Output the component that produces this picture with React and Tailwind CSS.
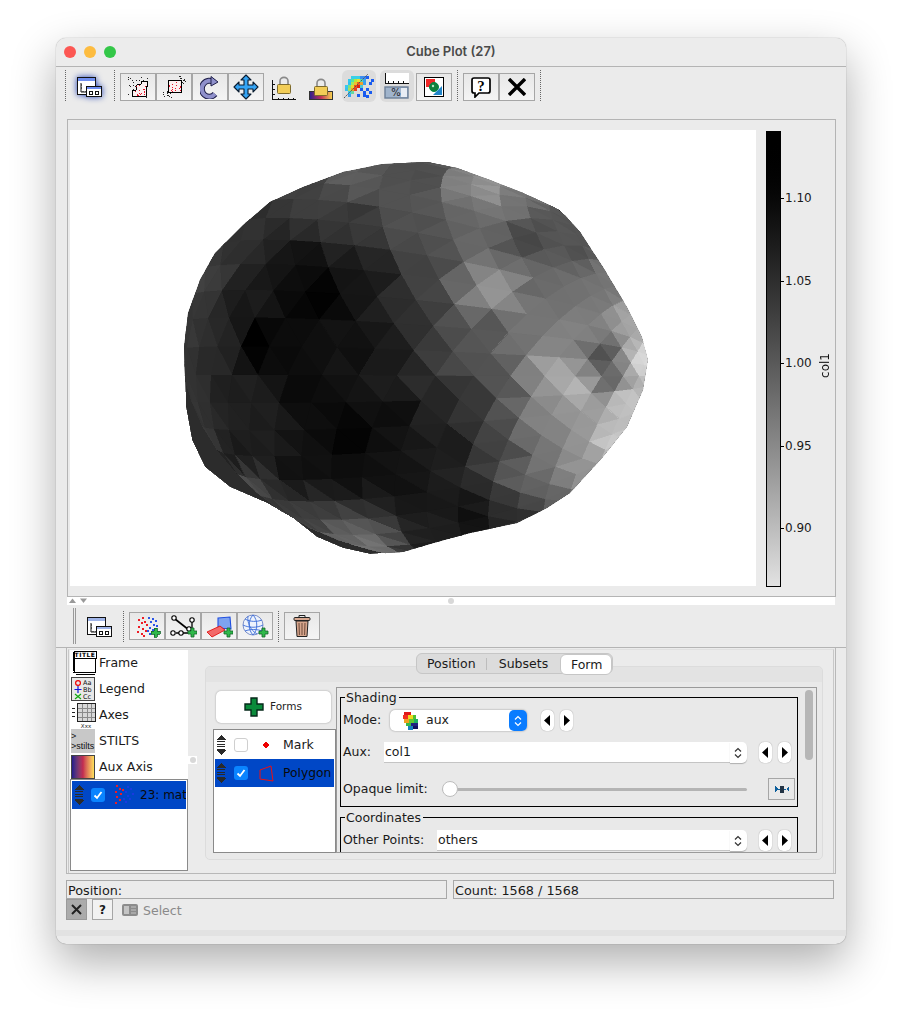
import React from "react";

const uiFont = { fontFamily: '"DejaVu Sans", sans-serif' };

// silhouette of the shape model, in page coordinates
const outline =
  "427,162 383,164 343,172 303,187 270,202 243,225 215,253 200,280 188,313 184,347 186,407 192,440 205,467 230,487 267,503 293,518 317,537 343,548 370,554 403,552 437,542 470,533 517,523 547,508 570,493 603,457 627,427 643,390 648,360 642,337 627,307 603,267 580,232 560,210 523,193 490,180 457,168";

// grey levels read off the picture: x, y, level
const shades = [
  [427,172,0x50],[460,185,0x88],[490,190,0x9a],[520,205,0x78],[545,225,0x55],[525,240,0x48],[575,250,0x55],[600,280,0x78],
  [630,320,0xaa],[645,360,0xdd],[625,400,0xcc],[610,440,0xcc],[575,470,0x99],[555,500,0x66],[520,515,0x33],[480,525,0x18],
  [430,535,0x22],[370,550,0x77],[340,545,0x66],[300,520,0x44],[240,490,0x55],[200,450,0x44],[190,400,0x3a],[190,340,0x3a],
  [205,280,0x44],[250,230,0x33],[310,190,0x44],[350,180,0x66],[350,215,0x3a],[400,200,0x55],[420,225,0x55],[470,215,0x68],
  [300,270,0x11],[250,300,0x1c],[260,345,0x00],[310,290,0x00],[330,300,0x05],[370,280,0x1a],[420,270,0x44],[420,340,0x33],
  [450,350,0x55],[490,290,0x99],[510,290,0x99],[520,340,0x77],[490,330,0x5a],[550,370,0xaa],[575,385,0xbb],[600,355,0x55],
  [610,380,0x66],[580,330,0x88],[560,300,0x77],[530,280,0x66],[590,290,0x77],[500,380,0x58],[470,400,0x3a],[540,420,0x88],
  [580,430,0x99],[500,450,0x44],[450,450,0x1c],[400,420,0x11],[340,420,0x0a],[310,380,0x0a],[300,470,0x11],[350,470,0x11],
  [350,440,0x00],[400,480,0x11],[420,500,0x1a],[470,510,0x11],[490,500,0x33],[520,480,0x66],[540,460,0x77],[440,400,0x2a],
  [400,350,0x1c],[360,350,0x14],[230,400,0x22],[240,450,0x1c],[220,350,0x2a],
];

function shadeAt(x, y, seed) {
  let sum = 0;
  let weight = 0;
  for (const [sx, sy, g] of shades) {
    const d = (sx - x) ** 2 + (sy - y) ** 2 + 60;
    const w = 1 / d ** 1.6;
    sum += g * w;
    weight += w;
  }
  const jitter = ((Math.sin(seed * 12.9898) * 43758.5453) % 1) * 3;
  const base = 255 * (sum / weight / 255) ** 1.05;
  const g = Math.max(0, Math.min(235, Math.round(base + jitter)));
  return `rgb(${g},${g},${g})`;
}

// hexagonal rings round the dark pole, projected off a sphere
function buildMesh() {
  const cx = 416, cy = 358, rx = 236, ry = 200;
  const px = -0.74, py = -0.06;
  const pz = Math.sqrt(1 - px * px - py * py);
  const e1 = [pz, 0, -px];
  const e2 = [-py * e1[2], pz * e1[0] - px * e1[2], py * e1[0]];
  const n2 = Math.hypot(...e2);
  e2[0] /= n2; e2[1] /= n2; e2[2] /= n2;
  const step = 0.165;
  function project(u, v) {
    const l = Math.hypot(u, v);
    const th = l * step;
    const ca = l ? u / l : 1;
    const sa = l ? v / l : 0;
    const s = Math.sin(th);
    const c = Math.cos(th);
    const X = s * (ca * e1[0] + sa * e2[0]) + c * px;
    const Y = s * (ca * e1[1] + sa * e2[1]) + c * py;
    const Z = s * (ca * e1[2] + sa * e2[2]) + c * pz;
    return { x: cx + rx * X, y: cy + ry * Y, z: Z };
  }
  const vert = (ring, j) => {
    if (ring === 0) return project(0, 0);
    const side = Math.floor(j / ring) % 6;
    const t = (j % ring) / ring;
    const a0 = (side * Math.PI) / 3;
    const a1 = ((side + 1) * Math.PI) / 3;
    const u = ring * (Math.cos(a0) * (1 - t) + Math.cos(a1) * t);
    const v = ring * (Math.sin(a0) * (1 - t) + Math.sin(a1) * t);
    return project(u, v);
  };
  const tris = [];
  for (let ring = 0; ring < 16; ring++) {
    const outer = (ring + 1) * 6;
    const inner = ring * 6;
    for (let j = 0; j < outer; j++) {
      const side = Math.floor(j / (ring + 1));
      const k = j - side;
      const a = vert(ring + 1, j);
      const b = vert(ring + 1, (j + 1) % outer);
      const c = ring === 0 ? vert(0, 0) : vert(ring, inner ? k % inner : 0);
      tris.push([a, b, c]);
      if (ring > 0 && (j + 1) % (ring + 1) !== 0) {
        const d = vert(ring, (k + 1) % inner);
        tris.push([b, d, c]);
      }
    }
  }
  return tris
    .map((t) => ({ t, z: (t[0].z + t[1].z + t[2].z) / 3 }))
    .filter((o) => o.z > -0.15)
    .sort((p, q) => p.z - q.z)
    .map(({ t }, i) => {
      const mx = (t[0].x + t[1].x + t[2].x) / 3;
      const my = (t[0].y + t[1].y + t[2].y) / 3;
      return {
        pts: t.map((p) => `${p.x.toFixed(1)},${p.y.toFixed(1)}`).join(" "),
        fill: shadeAt(mx, my, i + 1),
      };
    });
}

const mesh = buildMesh();

const Blob = () => (
  <svg viewBox="70 130 686 456" width="686" height="456" className="block">
    <defs>
      <clipPath id="blob">
        <polygon points={outline} />
      </clipPath>
    </defs>
    <g clipPath="url(#blob)" shapeRendering="crispEdges">
      <polygon points={outline} fill="#2c2c2c" />
      {mesh.map((t, i) => (
        <polygon key={i} points={t.pts} fill={t.fill} stroke={t.fill} strokeWidth="0.6" />
      ))}
    </g>
  </svg>
);

// scattered single pixel points for the toolbar icons
const scatter = (n, x0, y0, w, h, seed) =>
  Array.from({ length: n }, (_, i) => {
    const a = Math.abs(Math.sin((i + 1) * 91.17 + seed) * 9973) % 1;
    const b = Math.abs(Math.sin((i + 1) * 47.31 + seed) * 7919) % 1;
    return [Math.round(x0 + a * w), Math.round(y0 + b * h)];
  });

const Dots = ({ pts, color, size = 1 }) =>
  pts.map(([x, y], i) => <rect key={i} x={x} y={y} width={size} height={size} fill={color} />);

const Plus = ({ x, y }) => (
  <path
    d={`M${x + 3} ${y}h3v3h3v3h-3v3h-3v-3h-3v-3h3z`}
    fill="#2fb84a"
    stroke="#14662a"
    strokeWidth="0.8"
  />
);

const WindowsIcon = ({ glow }) => (
  <svg
    width="30"
    height="24"
    viewBox="0 0 30 24"
    className={glow ? "drop-shadow-[0_0_3px_#1e3fb4]" : ""}
  >
    <rect x="3.5" y="2.5" width="18" height="17" fill="#fff" stroke="#111" />
    <rect x="4" y="3" width="17" height="3" fill={glow ? "#6f8ef0" : "#9fb4e8"} />
    <path d="M7 8v9h8M7 10h1M7 13h1M9 17v-1M12 17v-1" stroke="#111" fill="none" />
    <rect x="12.5" y="11.5" width="15" height="10" fill="#fff" stroke="#111" />
    <rect x="13" y="12" width="14" height="2" fill={glow ? "#6f8ef0" : "#9fb4e8"} />
    <rect x="15.5" y="16.5" width="3" height="3" fill="none" stroke="#111" />
    <rect x="21.5" y="16.5" width="3" height="3" fill="none" stroke="#111" />
  </svg>
);

const BlobBlobIcon = () => (
  <svg width="24" height="24" viewBox="0 0 24 24" shapeRendering="crispEdges">
    <Dots pts={scatter(34, 1, 2, 20, 20, 2)} color="#222" />
    <path d="M11 10l4-1 1-3 5 0 1 5-2 1 0 9-13 1-1-7 4 0z" fill="#fbf0f0" stroke="#000" />
    <Dots pts={scatter(18, 9, 10, 11, 10, 5)} color="#e8152b" />
  </svg>
);

const BoxBoxIcon = () => (
  <svg width="24" height="24" viewBox="0 0 24 24" shapeRendering="crispEdges">
    <Dots pts={scatter(14, 16, 1, 7, 8, 3)} color="#222" />
    <Dots pts={scatter(14, 1, 15, 8, 8, 4)} color="#222" />
    <rect x="6.5" y="5.5" width="13" height="12" fill="#fbf0f0" stroke="#000" />
    <Dots pts={scatter(16, 7, 6, 12, 11, 7)} color="#e8152b" />
  </svg>
);

const RotateIcon = () => (
  <svg width="20" height="24" viewBox="0 0 20 24">
    <path d="M14 7.5A7.5 8 0 1 0 15 19" fill="none" stroke="#20204a" strokeWidth="6" />
    <path d="M14 7.5A7.5 8 0 1 0 15 19" fill="none" stroke="#8f90cb" strokeWidth="4" />
    <path d="M11 1.5l7 5.5-7 4z" fill="#8f90cb" stroke="#20204a" strokeLinejoin="round" />
  </svg>
);

const MoveIcon = () => (
  <svg width="26" height="26" viewBox="0 0 26 26">
    <path
      d="M13 1l5 5h-3v5h5V8l5 5-5 5v-3h-5v5h3l-5 5-5-5h3v-5H6v3l-5-5 5-5v3h5V6H8z"
      fill="#35a4f4"
      stroke="#0a1c30"
      strokeWidth="1.1"
      strokeLinejoin="round"
    />
  </svg>
);

const LockShape = ({ x, y }) => (
  <g>
    <path
      d={`M${x + 3} ${y + 7}V${y + 4}a4 3.6 0 0 1 8 0V${y + 7}`}
      fill="none"
      stroke="#8a8a8a"
      strokeWidth="1.6"
    />
    <rect x={x + 0.5} y={y + 7.5} width="13" height="9" rx="1" fill="#f2cd57" stroke="#7d6a2c" />
  </g>
);

const AxisLockIcon = () => (
  <svg width="24" height="24" viewBox="0 0 24 24">
    <LockShape x={5} y={1} />
    <path
      d="M.5 4v19.5H24M.5 8h2M.5 13h2M.5 18h2M6 23.5v-2M11 23.5v-2M16 23.5v-2M21 23.5v-2"
      stroke="#111"
      fill="none"
      shapeRendering="crispEdges"
    />
  </svg>
);

const AuxLockIcon = () => (
  <svg width="24" height="22" viewBox="0 0 24 22">
    <defs>
      <linearGradient id="ramp">
        <stop offset="0" stopColor="#2a1f8f" />
        <stop offset="0.5" stopColor="#c0305a" />
        <stop offset="1" stopColor="#f8d850" />
      </linearGradient>
    </defs>
    <rect x="0.5" y="13.5" width="23" height="8" fill="url(#ramp)" stroke="#333" />
    <LockShape x={5} y={1} />
  </svg>
);

const DensityIcon = () => {
  const cells = [
    [7,3,"#38d0e8"],[10,3,"#38d0e8"],[13,3,"#38d0e8"],[16,3,"#3a8cf0"],[19,3,"#3a8cf0"],[22,3,"#1a5cf0"],
    [4,6,"#30c8f0"],[7,6,"#58e0a0"],[10,6,"#b0e840"],[13,6,"#e8e030"],[16,6,"#58d8b0"],[19,6,"#38a0f0"],[27,6,"#1a5cf0"],
    [4,9,"#30c0f0"],[7,9,"#a0e860"],[10,9,"#f0c030"],[13,9,"#f06020"],[16,9,"#f0a030"],[19,9,"#38a0f0"],[25,9,"#1a5cf0"],
    [1,12,"#38c8f0"],[4,12,"#80e080"],[7,12,"#e8d830"],[10,12,"#f05020"],[13,12,"#e02010"],[16,12,"#50c8d0"],
    [1,15,"#38c0f0"],[4,15,"#a8e060"],[7,15,"#f0a028"],[10,15,"#e84020"],[16,15,"#1a5cf0"],[22,15,"#1a5cf0"],
    [4,18,"#38c8e8"],[7,18,"#68d8a0"],[19,18,"#1a5cf0"],[25,18,"#1a5cf0"],
    [4,21,"#38a0f0"],[13,21,"#1a5cf0"],[19,21,"#1a5cf0"],[22,22,"#1a5cf0"],
  ];
  return (
    <svg width="30" height="26" viewBox="0 0 30 26" shapeRendering="crispEdges">
      {cells.map(([x, y, c], i) => (
        <rect key={i} x={x} y={y} width="3" height="3" fill={c} />
      ))}
      <path d="M0 25L24 1" stroke="#555" strokeDasharray="2 1" shapeRendering="auto" />
    </svg>
  );
};

const PercentIcon = () => (
  <svg width="26" height="26" viewBox="0 0 26 26">
    <rect x="1" y="0" width="24" height="10" fill="#fff" />
    <path d="M1 0v10.5h24M4 10v-2M9 10v-2M14 10v-2M19 10v-2" stroke="#111" fill="none" shapeRendering="crispEdges" />
    <rect x="1" y="14" width="23" height="11" fill="#a0b4cc" stroke="#6c7f98" strokeWidth="1.4" />
    <rect x="17" y="15" width="6" height="9" fill="#e8edf4" />
    <text x="12" y="23" fontSize="10" fontFamily="DejaVu Sans" textAnchor="middle" fill="#222">%</text>
  </svg>
);

const ColourIcon = () => (
  <svg width="20" height="20" viewBox="0 0 20 20">
    <rect x="0.5" y="0.5" width="19" height="19" fill="#fff" stroke="#000" />
    <rect x="2" y="2" width="9" height="8" fill="#f02828" />
    <path d="M18 9v9H9z" fill="#1f84c8" />
    <circle cx="10" cy="10" r="4.5" fill="#12803c" stroke="#084" />
    <circle cx="9" cy="9" r="1.2" fill="#b8e8c8" />
  </svg>
);

const HelpIcon = () => (
  <svg width="22" height="22" viewBox="0 0 22 22">
    <path
      d="M4 2h14a2 2 0 0 1 2 2v11a2 2 0 0 1-2 2H9l-4 4v-4H4a2 2 0 0 1-2-2V4a2 2 0 0 1 2-2z"
      fill="#fff"
      stroke="#000"
      strokeWidth="1.7"
    />
    <text x="11" y="15" fontSize="15" fontWeight="700" fontFamily="Liberation Serif" textAnchor="middle" fill="#000">?</text>
  </svg>
);

const CloseIcon = () => (
  <svg width="18" height="18" viewBox="0 0 18 18">
    <path d="M1 1l16 16M17 1L1 17" stroke="#000" strokeWidth="3.4" />
  </svg>
);

const AddPointsIcon = () => (
  <svg width="28" height="24" viewBox="0 0 28 24" shapeRendering="crispEdges">
    <Dots pts={[[9,3],[5,5],[8,8],[11,7],[13,10],[5,12],[9,14],[4,17],[8,19],[12,16],[10,21]]} color="#ee1c25" size={2} />
    <Dots pts={[[15,3],[19,4],[22,6],[17,7],[20,10],[16,13],[23,11],[14,16],[19,15],[16,19]]} color="#2a55e8" size={2} />
    <Plus x={18} y={14} />
  </svg>
);

const AddLineIcon = () => (
  <svg width="28" height="24" viewBox="0 0 28 24">
    <path d="M6 5l14 11" stroke="#000" strokeWidth="1.6" />
    <path d="M7 19h14M23 6v11" stroke="#000" strokeWidth="1.3" />
    {[[5,4],[20,15],[4,19],[12,19],[23,6]].map(([x, y], i) => (
      <circle key={i} cx={x} cy={y} r="2.2" fill="#fff" stroke="#000" strokeWidth="1.1" />
    ))}
    <Plus x={19} y={14} />
  </svg>
);

const AddPolyIcon = () => (
  <svg width="28" height="24" viewBox="0 0 28 24">
    <path d="M13 4l12-1 1 12-13-1z" fill="#7ea3f0" stroke="#1f4ee0" strokeWidth="1.1" />
    <path d="M2 18l13-6 5 4-13 7z" fill="#f26a6a" stroke="#e00000" strokeWidth="0.8" />
    <Plus x={19} y={14} />
  </svg>
);

const AddSkyIcon = () => (
  <svg width="28" height="24" viewBox="0 0 28 24">
    <circle cx="12" cy="11" r="10" fill="#eef3fc" stroke="#7b8fc8" />
    <path
      d="M2 11c6 3 14 3 20 0M4 5c5 3 12 3 17 1M4 17c5-2 12-2 17 0M12 1C7 6 7 16 12 21M12 1c5 5 5 15 0 20M7 2c-1 6 2 14 9 18"
      stroke="#3a6cd8"
      fill="none"
      strokeWidth="0.9"
    />
    <Plus x={18} y={14} />
  </svg>
);

const TrashIcon = () => (
  <svg width="18" height="24" viewBox="0 0 18 24">
    <path d="M6 3V1.5h6V3" stroke="#222" fill="none" />
    <rect x="1" y="3.5" width="16" height="3" rx="1" fill="#d8a890" stroke="#222" />
    <path d="M3 7h12l-1 15.5H4z" fill="#d6a58c" stroke="#222" />
    <path d="M6 9l.4 12M9 9v12M12 9l-.4 12" stroke="#6d4a3a" />
  </svg>
);

const FrameIcon = () => (
  <svg width="26" height="26" viewBox="0 0 26 26" shapeRendering="crispEdges">
    <rect x="3.5" y="1.5" width="21" height="21" fill="#fff" stroke="#000" />
    <rect x="3" y="1" width="22" height="7" fill="#fff" stroke="#000" />
    <text x="14" y="7" fontSize="6" fontWeight="700" fontFamily="DejaVu Sans" textAnchor="middle" letterSpacing="0.5" fill="#000">TITLE</text>
    <path d="M2 2h2M2 22h2M2 3v18M5 24h19" stroke="#000" fill="none" />
  </svg>
);

const LegendIcon = () => (
  <svg width="24" height="24" viewBox="0 0 24 24">
    <rect x="0.5" y="0.5" width="23" height="23" fill="#e8e8e8" stroke="#444" />
    <circle cx="7" cy="6" r="2.4" fill="none" stroke="#e00" strokeWidth="1.2" />
    <path d="M3.5 12.5h7M7 9v7" stroke="#11d" strokeWidth="1.2" />
    <path d="M4 17l6 5M10 17l-6 5" stroke="#1a1" strokeWidth="1.2" />
    <g fontSize="6.5" fontFamily="DejaVu Sans" fill="#111">
      <text x="12" y="8">Aa</text>
      <text x="12" y="15">Bb</text>
      <text x="12" y="22">Cc</text>
    </g>
  </svg>
);

const AxesIcon = () => (
  <svg width="26" height="26" viewBox="0 0 26 26" shapeRendering="crispEdges">
    <rect x="6.5" y="1.5" width="18" height="18" fill="#d8d8d8" stroke="#222" />
    <path d="M11 2v17M16 2v17M20 2v17M7 6h17M7 10h17M7 15h17" stroke="#8a8a8a" />
    <path d="M1 6h3v1H1zM1 10h3v1H1zM1 14h3v1H1z" fill="#222" />
    <text x="15" y="25.5" fontSize="5.5" fontFamily="DejaVu Sans" textAnchor="middle" fill="#222">Xxx</text>
  </svg>
);

const StiltsIcon = () => (
  <div
    className="w-[24px] h-[24px] bg-[#c8c8c8] text-[9px] leading-[10px] text-[#111] pt-[2px] overflow-hidden"
    style={{ fontFamily: '"Liberation Sans", sans-serif' }}
  >
    <div>&gt;</div>
    <div>&gt;stilts</div>
  </div>
);

const AuxIcon = () => (
  <div className="w-[24px] h-[24px] border border-[#444] bg-gradient-to-r from-[#241a8c] via-[#c42a50] to-[#fde05a]" />
);

const SortHandle = () => (
  <svg width="10" height="20" viewBox="0 0 10 20" shapeRendering="crispEdges">
    <path d="M5 0l5 5H0zM5 20l-5-5h10z" fill="#2a2a2a" />
    <path d="M1 6.5h8M1 9h8M1 11.5h8M1 14h8" stroke="#2a2a2a" />
  </svg>
);

const Check = ({ on }) =>
  on ? (
    <div className="w-[14px] h-[14px] rounded-[3px] bg-[#0a84ff] flex items-center justify-center">
      <svg width="10" height="10" viewBox="0 0 10 10">
        <path d="M1.5 5.5l2.5 2.5 4.5-6" stroke="#fff" strokeWidth="1.8" fill="none" />
      </svg>
    </div>
  ) : (
    <div className="w-[14px] h-[14px] rounded-[3px] bg-white border border-[#cfcfcf]" />
  );

const Stepper = () => (
  <svg width="8" height="12" viewBox="0 0 8 12">
    <path d="M1 4.5L4 1.5l3 3M1 7.5l3 3 3-3" stroke="#333" strokeWidth="1.2" fill="none" />
  </svg>
);

const ArrowButtons = () => (
  <div className="flex gap-[6px]">
    {[0, 1].map((i) => (
      <div
        key={i}
        className="w-[13px] h-[21px] rounded-[5px] bg-white shadow-[0_0_1px_rgba(0,0,0,0.45)] flex items-center justify-center"
      >
        <svg width="7" height="11" viewBox="0 0 7 11">
          <path d={i === 0 ? "M6 0v11L0 5.5z" : "M1 0v11l6-5.5z"} fill="#000" />
        </svg>
      </div>
    ))}
  </div>
);

const ComboField = ({ width, value }) => (
  <div className="flex">
    <div
      className="h-[21px] bg-white border-b border-[#c4c4c4] pl-[1px] text-[12.5px] leading-[20px]"
      style={{ width }}
    >
      {value}
    </div>
    <div className="w-[17px] h-[21px] bg-white rounded-r-[5px] shadow-[0_1px_1px_rgba(0,0,0,0.25)] flex items-center justify-center pr-[2px]">
      <Stepper />
    </div>
  </div>
);

const Separator = ({ className = "" }) => (
  <div className={`w-0 h-[31px] border-l border-dotted border-[#666] ${className}`} />
);

const ToolButton = ({ children }) => (
  <div className="w-[36px] h-[28px] border border-[#a6a6a6] bg-gradient-to-b from-[#e8e8e8] to-[#f4f4f4] flex items-center justify-center">
    {children}
  </div>
);

const controls = [
  ["Frame", <FrameIcon key="i" />],
  ["Legend", <LegendIcon key="i" />],
  ["Axes", <AxesIcon key="i" />],
  ["STILTS", <StiltsIcon key="i" />],
  ["Aux Axis", <AuxIcon key="i" />],
];

const ticks = [
  ["1.10", 197],
  ["1.05", 280],
  ["1.00", 362],
  ["0.95", 445],
  ["0.90", 527],
];

const TitledBox = ({ title, className, children }) => (
  <fieldset className={`border border-black px-[2px] min-w-0 ${className}`}>
    <legend className="ml-[2px] pl-px pr-[2px] text-[12.5px] leading-[15px]">{title}</legend>
    {children}
  </fieldset>
);

export default function App() {
  return (
    <div className="w-[902px] h-[1018px] bg-white pt-[38px] pl-[56px] overflow-hidden text-[#1a1a1a]" style={uiFont}>
      <div className="w-[790px] h-[906px] rounded-[10px] bg-[#ebebeb] overflow-hidden shadow-[0_0_1px_rgba(0,0,0,0.5),0_18px_45px_rgba(0,0,0,0.32)]">
        {/* title bar */}
        <div className="h-[29px] flex items-center bg-[#ececec] border-b border-[#b4b4b4]">
          <div className="w-[70px] flex gap-[8px] pl-[8px]">
            <div className="w-[12px] h-[12px] rounded-full bg-[#fc5753]" />
            <div className="w-[12px] h-[12px] rounded-full bg-[#fdbc40]" />
            <div className="w-[12px] h-[12px] rounded-full bg-[#33c748]" />
          </div>
          <div
            className="flex-1 text-center pr-[70px] text-[13px] font-semibold text-[#4a4a4a]"
            style={{ fontFamily: "Inter, sans-serif" }}
          >
            Cube Plot (27)
          </div>
        </div>

        {/* main toolbar */}
        <div className="h-[41px] flex items-start pt-[3px]">
          <Separator className="ml-[9px]" />
          <div className="w-[30px] h-[24px] ml-[8px] mt-[5px]">
            <WindowsIcon glow />
          </div>
          <Separator className="ml-[10px]" />
          <div className="flex ml-[5px] mt-[3px]">
            <ToolButton><BlobBlobIcon /></ToolButton>
            <ToolButton><BoxBoxIcon /></ToolButton>
            <ToolButton><RotateIcon /></ToolButton>
            <ToolButton><MoveIcon /></ToolButton>
          </div>
          <div className="ml-[8px] mt-[6px]"><AxisLockIcon /></div>
          <div className="ml-[13px] mt-[8px]"><AuxLockIcon /></div>
          <div className="ml-[9px] w-[34px] h-[32px] rounded-[6px] bg-[#dcdcdc] flex items-center justify-center"><DensityIcon /></div>
          <div className="ml-[4px] w-[34px] h-[32px] rounded-[6px] bg-[#dcdcdc] flex items-center justify-center"><PercentIcon /></div>
          <div className="flex ml-[2px] mt-[3px]">
            <ToolButton><ColourIcon /></ToolButton>
          </div>
          <Separator className="ml-[5px]" />
          <div className="flex ml-[5px] mt-[3px]">
            <ToolButton><HelpIcon /></ToolButton>
            <ToolButton><CloseIcon /></ToolButton>
          </div>
          <Separator className="ml-[5px]" />
        </div>

        {/* plot panel */}
        <div className="ml-[11px] mt-[11px] w-[769px] h-[478px] border border-[#b4b4b4] flex">
          <div className="ml-[2px] mt-[10px] w-[686px] h-[456px] bg-white">
            <Blob />
          </div>
          <div className="ml-[10px] mt-[11px] relative">
            <div className="w-[15px] h-[456px] border border-black bg-gradient-to-b from-[#000] to-[#e2e2e2]" />
            {ticks.map(([label, y]) => (
              <div
                key={label}
                className="absolute left-[15px] flex items-center text-[12px] h-[14px] leading-[14px]"
                style={{ top: y - 131 - 6 }}
              >
                <div className="w-[3px] h-px bg-black mr-[1px]" />
                {label}
              </div>
            ))}
            <div className="absolute left-[52px] top-[222px] text-[12px] leading-[14px] text-[#111] [writing-mode:vertical-rl] rotate-180">
              col1
            </div>
          </div>
        </div>

        {/* divider */}
        <div className="ml-[11px] w-[768px] h-[8px] bg-white flex items-center relative">
          <svg width="20" height="6" viewBox="0 0 20 6" className="ml-[2px]">
            <path d="M0 5l3.5-4.5L7 5z" fill="#999" />
            <path d="M11 .5l3.5 4.5L18 .5z" fill="#999" />
          </svg>
          <div className="absolute left-[381px] w-[6px] h-[6px] rounded-full bg-[#d8d8d8]" />
        </div>

        {/* layer toolbar */}
        <div className="h-[43px] flex items-center border-b border-[#b4b4b4]">
          <div className="ml-[17px] w-[3px] h-[36px] border-x border-[#999]" />
          <div className="ml-[8px] mt-[2px]"><WindowsIcon /></div>
          <Separator className="ml-[9px]" />
          <div className="flex ml-[5px]">
            <ToolButton><AddPointsIcon /></ToolButton>
            <ToolButton><AddLineIcon /></ToolButton>
            <ToolButton><AddPolyIcon /></ToolButton>
            <ToolButton><AddSkyIcon /></ToolButton>
          </div>
          <Separator className="ml-[5px]" />
          <div className="flex ml-[5px]">
            <ToolButton><TrashIcon /></ToolButton>
          </div>
        </div>

        {/* control stack and control panel */}
        <div className="ml-[10px] w-[770px] h-[226px] border border-t-0 border-[#b8b8b8] pt-[1px] px-[1px]">
          <div className="h-full border border-b-0 border-[#c8c8c8] border-t-[#e0e0e0] flex">
            <div className="w-[119px] pl-[1px] shrink-0 relative">
              <div className="bg-white h-[130px]">
                {controls.map(([label, icon]) => (
                  <div key={label} className="h-[26px] flex items-center text-[12.5px]">
                    <div className="w-[29px] pl-px shrink-0">{icon}</div>
                    {label}
                  </div>
                ))}
              </div>
              <div className="-mt-[1px] h-[92px] border border-[#8a8a8a] bg-white p-px relative overflow-hidden">
                <div className="h-[28px] bg-[#0047c6] flex items-center text-[12px] text-[#0a0a0a] overflow-hidden whitespace-nowrap">
                  <div className="ml-[2px]"><SortHandle /></div>
                  <div className="ml-[7px]"><Check on /></div>
                  <svg width="22" height="22" viewBox="0 0 22 22" className="ml-[8px] shrink-0" shapeRendering="crispEdges">
                    <Dots pts={[[3,1],[6,4],[2,7],[7,9],[3,12],[6,15],[2,18],[9,5]]} color="#ee1c25" size={2} />
                    <Dots pts={[[14,2],[17,4],[12,7],[19,9],[14,11],[10,14],[16,14],[12,17]]} color="#1a3ae0" size={2} />
                  </svg>
                  <span className="ml-[5px]">23: mat</span>
                </div>
              </div>
              <div className="absolute left-[119px] top-[106px] w-[9px] h-[8px] bg-white flex items-center justify-center">
                <div className="w-[6px] h-[6px] rounded-full bg-[#d8d8d8]" />
              </div>
            </div>

            <div className="ml-[17px] flex flex-col">
              <div className="mt-[3px] -mb-[8px] relative flex justify-center text-[12.5px] z-10">
                <div className="h-[21px] w-[197px] flex rounded-[6px] bg-[#dcdcdc] border border-[#c6c6c6] items-center pt-px">
                  <div className="w-[70px] text-center">Position</div>
                  <div className="w-px h-[12px] bg-[#bdbdbd]" />
                  <div className="w-[73px] text-center">Subsets</div>
                  <div className="w-[52px] h-[21px] -my-px rounded-[6px] bg-white border border-[#c6c6c6] text-center leading-[19px] pl-[2px]">Form</div>
                </div>
              </div>
              <div className="w-[618px] h-[194px] rounded-[5px] border border-[#dcdcdc] bg-[#e9e9e9] overflow-hidden">
                <div className="h-[15px] bg-[#e3e3e3]" />
                <div className="flex pl-[7px] pt-[5px]">
                  <div className="w-[123px] shrink-0">
                    <div className="ml-[3px] mt-[4px] w-[115px] h-[32px] rounded-[5px] bg-white shadow-[0_0_2px_rgba(0,0,0,0.35)] flex items-center">
                      <svg width="20" height="20" viewBox="0 0 20 20" className="ml-[28px]">
                        <path d="M7 1h6v6h6v6h-6v6H7v-6H1V7h6z" fill="#0a8a3a" stroke="#06281a" strokeWidth="1.4" />
                      </svg>
                      <span className="ml-[6px] text-[10.5px] text-[#222]">Forms</span>
                    </div>
                    <div className="mt-[6px] h-[124px] border border-[#8a8a8a] bg-white p-px text-[12.5px]">
                      <div className="h-[28px] flex items-center">
                        <div className="ml-[1px]"><SortHandle /></div>
                        <div className="ml-[8px]"><Check /></div>
                        <svg width="8" height="8" viewBox="0 0 8 8" className="ml-[14px]">
                          <path d="M4 1l3 3-3 3-3-3z" fill="#ee0000" stroke="#ee0000" />
                        </svg>
                        <span className="ml-[13px]">Mark</span>
                      </div>
                      <div className="h-[28px] bg-[#0047c6] flex items-center whitespace-nowrap overflow-hidden text-[#0a0a0a]">
                        <div className="ml-[1px]"><SortHandle /></div>
                        <div className="ml-[8px]"><Check on /></div>
                        <svg width="18" height="18" viewBox="0 0 18 18" className="ml-[10px] shrink-0">
                          <path d="M2 6l11-4 2 15-13-2z" fill="none" stroke="#ee1010" strokeWidth="1" />
                        </svg>
                        <span className="ml-[7px] text-[12.3px]">Polygon</span>
                      </div>
                    </div>
                  </div>

                  <div className="w-[481px] h-[166px] border border-[#9a9a9a] flex overflow-hidden text-[12.5px]">
                    <div className="w-[466px] shrink-0 pl-[3px] pt-[2px]">
                      <TitledBox title="Shading" className="w-[458px] h-[117px]">
                        <div className="flex items-center mt-[5px] h-[21px]">
                          <div className="w-[47px] shrink-0">Mode:</div>
                          <div className="w-[137px] h-[21px] rounded-[5px] bg-white shadow-[0_0_2px_rgba(0,0,0,0.4)] flex items-center">
                            <svg width="16" height="18" viewBox="0 0 16 18" className="ml-[13px]" shapeRendering="crispEdges">
                              <rect x="1" y="0" width="4" height="3" fill="#e01818" />
                              <rect x="5" y="0" width="3" height="3" fill="#e01818" />
                              <rect x="0" y="3" width="5" height="4" fill="#f03020" />
                              <rect x="5" y="3" width="5" height="4" fill="#f0d820" />
                              <rect x="10" y="3" width="3" height="4" fill="#50c030" />
                              <rect x="1" y="7" width="5" height="4" fill="#f0a020" />
                              <rect x="6" y="7" width="5" height="4" fill="#60c830" />
                              <rect x="11" y="7" width="4" height="4" fill="#20b060" />
                              <rect x="3" y="11" width="5" height="3" fill="#38b848" />
                              <rect x="8" y="11" width="7" height="3" fill="#202080" />
                              <rect x="5" y="14" width="5" height="4" fill="#1880c0" />
                              <rect x="10" y="14" width="5" height="3" fill="#101060" />
                            </svg>
                            <span className="ml-[7px] flex-1">aux</span>
                            <div className="w-[18px] h-[21px] rounded-[5px] bg-[#0a7cff] flex items-center justify-center">
                              <svg width="8" height="12" viewBox="0 0 8 12">
                                <path d="M1 4.5L4 1.5l3 3M1 7.5l3 3 3-3" stroke="#fff" strokeWidth="1.2" fill="none" />
                              </svg>
                            </div>
                          </div>
                          <div className="ml-[14px]"><ArrowButtons /></div>
                        </div>
                        <div className="flex items-center mt-[11px] h-[21px]">
                          <div className="w-[41px] shrink-0">Aux:</div>
                          <ComboField width={346} value="col1" />
                          <div className="ml-[12px]"><ArrowButtons /></div>
                        </div>
                        <div className="flex items-center mt-[15px] h-[22px]">
                          <div className="w-[99px] shrink-0">Opaque limit:</div>
                          <div className="w-[306px] h-[3px] rounded-full bg-[#b4b4b4] relative">
                            <div className="absolute left-0 -top-[6.5px] w-[16px] h-[16px] rounded-full bg-white border border-[#bdbdbd]" />
                          </div>
                          <div className="ml-[21px] w-[27px] h-[22px] border border-[#a6a6a6] flex items-center justify-center">
                            <svg width="14" height="8" viewBox="0 0 14 8" shapeRendering="crispEdges">
                              <path d="M0 1l3 3-3 3zM14 1l-3 3 3 3z" fill="#0d5f9c" />
                              <path d="M3 4h8" stroke="#0d5f9c" />
                              <rect x="5" y="0.5" width="4" height="7" fill="#234" />
                            </svg>
                          </div>
                        </div>
                      </TitledBox>
                      <TitledBox title="Coordinates" className="w-[458px] h-[60px] mt-[3px] border-b-0">
                        <div className="flex items-center mt-[5px] h-[21px]">
                          <div className="w-[94px] shrink-0">Other Points:</div>
                          <ComboField width={293} value="others" />
                          <div className="ml-[12px]"><ArrowButtons /></div>
                        </div>
                      </TitledBox>
                    </div>
                    <div className="w-[14px] shrink-0 pl-[1px] pt-[2px]">
                      <div className="ml-[1px] w-[8px] h-[70px] rounded-full bg-[#b6b6b6]" />
                    </div>
                  </div>
                </div>
              </div>
            </div>
          </div>
        </div>

        {/* status */}
        <div className="mt-[6px] ml-[10px] flex gap-[6px] text-[12.8px]">
          <div className="w-[381px] h-[19px] border border-[#a8a8a8] pl-px leading-[19px]">Position:</div>
          <div className="w-[381px] h-[19px] border border-[#a8a8a8] pl-px leading-[19px]">Count: 1568 / 1568</div>
        </div>
        <div className="ml-[10px] h-[21px] flex items-center">
          <div className="w-[21px] h-[21px] bg-[#ababab] border border-[#9a9a9a] flex items-center justify-center">
            <svg width="11" height="11" viewBox="0 0 11 11">
              <path d="M1 1l9 9M10 1l-9 9" stroke="#222" strokeWidth="2" />
            </svg>
          </div>
          <div className="ml-[5px] w-[21px] h-[21px] bg-[#f2f2f2] border border-[#a6a6a6] flex items-center justify-center text-[12px] font-bold">
            ?
          </div>
          <svg width="16" height="12" viewBox="0 0 16 12" className="ml-[9px] mt-[1px]">
            <rect x="0" y="0" width="16" height="12" rx="2" fill="#8c8c8c" />
            <rect x="2" y="2" width="5" height="8" fill="#c4c4c4" />
            <path d="M9 3h5M9 6h5M9 9h5" stroke="#c4c4c4" />
          </svg>
          <span className="ml-[5px] mt-[3px] text-[12.5px] text-[#8a8a8a]">Select</span>
        </div>
        <div className="mt-[10px] h-[6px] bg-[#e2e2e2]" />
      </div>
    </div>
  );
}
